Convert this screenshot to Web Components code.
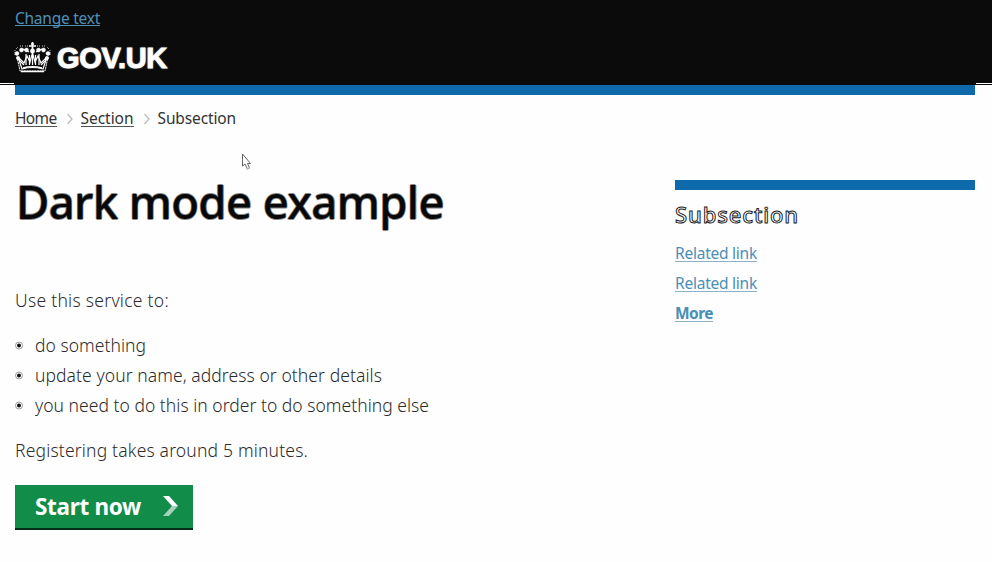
<!DOCTYPE html>
<html lang="en"><head><meta charset="utf-8"><title>Dark mode example</title>
<style>html,body{margin:0;background:#fefefe}body{width:992px;height:562px;overflow:hidden;font-family:"Noto Sans","Open Sans",sans-serif}</style></head>
<body><dark-page></dark-page>
<script>
const define=(name,html,setup)=>customElements.define(name,class extends HTMLElement{
  connectedCallback(){if(this.shadowRoot)return;this.attachShadow({mode:'open'}).innerHTML=html;if(setup)setup(this)}
});
// One line of text whose tracking is adjusted to a given measure.
define('fit-line','<style>:host{display:inline-block;white-space:nowrap}span{display:inline-block}</style><span><slot></slot></span>',el=>{
  const w=+el.getAttribute('measure'),s=el.shadowRoot.querySelector('span'),n=[...el.textContent].length;
  el.style.width=w+'px';
  s.style.letterSpacing='0px';
  s.style.letterSpacing=((w-s.getBoundingClientRect().width)/n)+'px';
});
define('site-header',`<style>
:host{display:block;background:#0b0b0b;height:85px;box-sizing:border-box;position:relative;padding:8px 15px 0}
a{display:block;width:85px;color:#4f8fb8;font-size:15.500px;line-height:20px;height:17px;border-bottom:1px solid #4f8fb8}
.brand{display:flex;gap:6px;height:36px;margin-top:15px;align-items:flex-start}
svg{display:block;width:37px;height:32px;margin-left:-1px}
.name{font:700 29px/35px "Liberation Sans",sans-serif;color:#fff;-webkit-text-stroke:1px #fff;paint-order:stroke;text-shadow:0 0 2px #ddd}
i{position:absolute;top:83px;height:1px;background:#fff;left:0;width:14px}i+i{left:auto;right:0;width:16px}
</style><a><fit-line measure="85">Change text</fit-line></a>
<div class="brand"><svg viewBox="0 0 37 32" fill="none" stroke="#fff">
<path d="M4 16L8 28Q18.500 25 29 28L33 16L27 22L24 15L21 21L18.500 12L16 21L13 15L10 22Z" stroke-width="1.200"/>
<path d="M3 16L6 30H31L34 16" stroke-width="1" stroke-dasharray="2 .6"/>
<path d="M7 30.500H30M9 27Q18.500 24.500 28 27" stroke-width="1.700"/>
<path d="M18.500 1v10M15 5h7M17 3h3" stroke-width="1.700"/>
<g fill="#fff" stroke="#fff" stroke-width=".5"><circle cx="18.500" cy="10" r="2.200"/><circle cx="12.500" cy="9" r="2"/><circle cx="24.500" cy="9" r="2"/><circle cx="7.500" cy="9" r="2"/><circle cx="29.500" cy="9" r="2"/><circle cx="3" cy="12.500" r="2"/><circle cx="34" cy="12.500" r="2"/><circle cx="4" cy="17" r="1.700"/><circle cx="33" cy="17" r="1.700"/></g>
<path d="M9 8L15 11M28 8L22 11M5 19L10 24M32 19L27 24M12 13V24M25 13V24M15.500 14V24M21.500 14V24M18.500 12V24" stroke-width="1.200"/>
<path d="M1 9v5M2 8l2-2M36 9v5M35 8l-2-2M6 5h3M28 5h3M11 5h3M23 5h3" stroke-width=".8" stroke-dasharray="1 1"/>
</svg><fit-line measure="110" class="name">GOV.UK</fit-line></div><i></i><i></i>`);
define('crumb-trail',`<style>
:host{display:flex;align-items:center;height:24px;color:#333;font-size:15.500px;line-height:24px}
.l{border-bottom:1px solid #555;line-height:16px;height:16px}svg{width:8px;height:12px}
svg:nth-of-type(1){margin:1px 7px 0 9px}svg:nth-of-type(2){margin:1px 7px 0 9px}
</style><a class="l"><fit-line measure="41.500">Home</fit-line></a><svg viewBox="0 0 8 12" fill="none" stroke="#bbb" stroke-width="1.300"><path d="M1.500 1L6 6L1.500 11"/></svg><a class="l"><fit-line measure="53">Section</fit-line></a><svg viewBox="0 0 8 12" fill="none" stroke="#bbb" stroke-width="1.300"><path d="M1.500 1L6 6L1.500 11"/></svg><fit-line measure="78.500">Subsection</fit-line>`);
define('bullet-item',`<style>:host{display:grid;grid-template-columns:20px auto;height:30px;align-items:center}svg{width:9px;height:9px}</style>
<svg viewBox="0 0 9 9"><circle cx="4" cy="4.500" r="3.500" fill="#fff" stroke="#777" stroke-width=".7"/><circle cx="4" cy="4.500" r="2" fill="#111"/></svg><slot></slot>`);
define('start-button',`<style>:host{display:flex;align-items:center;width:178px;height:45px;box-sizing:border-box;padding:0 14px 2px 20px;background:#118c49;border-bottom:1px solid #052d18;box-shadow:inset 0 -1px #052d18;color:#fff;font-weight:700;font-size:22.500px;justify-content:space-between}svg{width:17px;height:20px}</style>
<slot></slot><svg viewBox="0 0 17 20"><path d="M1 0H7L16 10H10Z" fill="#fff"/><path d="M10 10H16L7 20H1Z" fill="#a5d2b9"/></svg>`);
define('related-links',`<style>:host{display:block;width:300px;border-top:10px solid #0e6aab}
h2{font-size:22px;line-height:30px;height:30px;margin:9px 0 14px;font-weight:500;color:#fefefe;-webkit-text-stroke:1px #222}
a{display:block;width:max-content;height:20px;line-height:20px;margin-bottom:10px;color:#4b8eb6;font-size:15.500px}a fit-line{height:18px;border-bottom:1.500px solid #8bb1c8;box-sizing:border-box;line-height:18px}b{font-weight:700}
</style><h2><fit-line measure="124">Subsection</fit-line></h2><a><fit-line measure="82">Related link</fit-line></a><a><fit-line measure="82">Related link</fit-line></a><a><b><fit-line measure="38">More</fit-line></b></a>`);
define('mouse-pointer',`<style>:host{position:absolute;left:241px;top:153px;width:11px;height:18px}svg{display:block}</style><svg width="11" height="18" viewBox="0 0 11 18"><path d="M1.500 1v12l2.500-2 2.500 5 2-1-2-4.500h3Z" fill="#fff" stroke="#555" stroke-width=".9"/><path d="M5 16l4-1" stroke="#bbb"/></svg>`);
define('dark-page',`<style>
:host{display:block;height:562px;position:relative;overflow:hidden}
.bar{height:10px;margin:0 17px 0 15px;background:#0e6aab}
crumb-trail{margin:11px 15px 0}
.cols{display:grid;grid-template-columns:660px 300px;padding:0 15px;margin-top:50px}
h1{margin:-12px 0 0;padding-left:1px;font-size:45.500px;line-height:66px;height:66px;font-weight:500;color:#080808;-webkit-text-stroke:2px #fff;paint-order:stroke;text-shadow:.8px 0 #888,-.8px 0 #888,0 .8px #888,0 -.8px #888}
.copy{font-size:17.500px;color:#2b2b2b;font-weight:300}
p{margin:0;height:30px;line-height:30px}
h1+.copy{padding-top:51px}
.list{margin:15px 0}
start-button{margin-top:20px}
</style><site-header></site-header><div class="bar"></div><crumb-trail></crumb-trail>
<div class="cols"><main><h1><fit-line measure="428">Dark mode example</fit-line></h1><div class="copy">
<p><fit-line measure="154">Use this service to:</fit-line></p><div class="list"><bullet-item><fit-line measure="111">do something</fit-line></bullet-item><bullet-item><fit-line measure="347">update your name, address or other details</fit-line></bullet-item><bullet-item><fit-line measure="394">you need to do this in order to do something else</fit-line></bullet-item></div><p><fit-line measure="293">Registering takes around 5 minutes.</fit-line></p></div>
<start-button><fit-line measure="106">Start now</fit-line></start-button></main><related-links></related-links></div><mouse-pointer></mouse-pointer>`);
</script></body></html>
